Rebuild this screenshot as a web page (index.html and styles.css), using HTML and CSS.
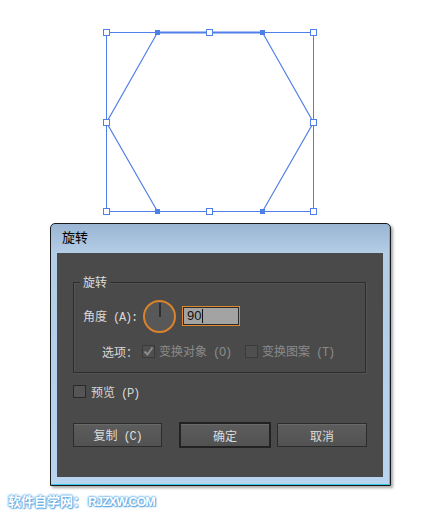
FILE: index.html
```html
<!DOCTYPE html>
<html lang="zh">
<head>
<meta charset="utf-8">
<link rel="stylesheet" href="styles.css">
</head>
<body>
<div class="canvas">
  <svg width="445" height="223" viewBox="0 0 445 223">
    <rect x="106.5" y="32.5" width="207" height="179" fill="none" stroke="#4f7fe9" stroke-width="1"/>
    <polygon points="157.5,32.5 262.5,32.5 313.5,122.5 262.5,211.5 157.5,211.5 106.5,122.5" fill="none" stroke="#4f7fe9" stroke-width="1.2"/>
    <line x1="157.5" y1="32.5" x2="262.5" y2="32.5" stroke="#4f7fe9" stroke-width="2"/>
    <g fill="#fff" stroke="#4f7fe9" stroke-width="1">
      <rect x="103.5" y="29.5" width="6" height="6"/>
      <rect x="206.5" y="29.5" width="6" height="6"/>
      <rect x="310.5" y="29.5" width="6" height="6"/>
      <rect x="103.5" y="119.5" width="6" height="6"/>
      <rect x="310.5" y="119.5" width="6" height="6"/>
      <rect x="103.5" y="208.5" width="6" height="6"/>
      <rect x="206.5" y="208.5" width="6" height="6"/>
      <rect x="310.5" y="208.5" width="6" height="6"/>
    </g>
    <g fill="#4f7fe9">
      <rect x="155" y="30" width="5" height="5"/>
      <rect x="260" y="30" width="5" height="5"/>
      <rect x="155" y="209" width="5" height="5"/>
      <rect x="260" y="209" width="5" height="5"/>
    </g>
  </svg>
</div>

<div class="dialog">
  <div class="titlebar">旋转</div>
  <div class="panel">
    <div class="group">
      <span class="legend">旋转</span>
      <div class="angle-row">
        <span class="angle-label">角度<span class="lat"> (A):</span></span>
        <div class="dial"><span class="needle"></span></div>
        <div class="field">90<span class="caret"></span></div>
      </div>
      <div class="options-row">
        <span class="opt-label">选项：</span>
        <span class="check checked disabled"><svg width="11" height="11" viewBox="0 0 11 11"><path d="M1.5 5.5 L4.5 8.5 L9.5 1.5" fill="none" stroke="#8c8c8c" stroke-width="2"/></svg></span>
        <span class="dim">变换对象<span class="lat"> (O)</span></span>
        <span class="check disabled second"></span>
        <span class="dim">变换图案<span class="lat"> (T)</span></span>
      </div>
    </div>
    <div class="preview-row">
      <span class="check"></span>
      <span class="label">预览<span class="lat"> (P)</span></span>
    </div>
    <div class="buttons">
      <button class="btn copy">复制<span class="lat"> (C)</span></button>
      <button class="btn ok">确定</button>
      <button class="btn cancel">取消</button>
    </div>
  </div>
</div>

<div class="watermark">软件自学网：<span class="wm-lat">RJZXW.COM</span></div>
</body>
</html>
```

FILE: styles.css
```css
html, body {
  margin: 0;
  padding: 0;
  background: #ffffff;
  font-family: "Noto Sans CJK SC", "Liberation Sans", sans-serif;
}

.canvas {
  height: 223px;
}

.canvas svg {
  display: block;
}

.dialog {
  box-sizing: border-box;
  margin-left: 50px;
  width: 341px;
  height: 263px;
  border: 1px solid #1a1a1a;
  border-radius: 5px 5px 0 0;
  background: linear-gradient(to bottom, #9ab5d3 0px, #b3cde7 28px, #b8d4ee 100%);
  box-shadow: inset -1px -1px 0 #38c6ea, 2px 2px 3px rgba(0, 0, 0, 0.35);
}

.titlebar {
  height: 29px;
  padding-left: 11px;
  font-size: 13px;
  line-height: 26px;
  color: #000;
}

.panel {
  box-sizing: border-box;
  margin-left: 6px;
  width: 326px;
  height: 224px;
  background: #4a4a4a;
  padding: 29px 0 0 16px;
  color: #d8d8d8;
  font-size: 12px;
}

.lat {
  font-family: "Liberation Mono", monospace;
  font-size: 12px;
  letter-spacing: -1.2px;
  white-space: pre;
}

.group {
  position: relative;
  box-sizing: border-box;
  width: 293px;
  height: 91px;
  border: 1px solid #2c2c2c;
  box-shadow: inset 1px 1px 0 rgba(255, 255, 255, 0.06), 1px 1px 0 rgba(255, 255, 255, 0.06);
  padding: 17px 0 0 9px;
}

.legend {
  position: absolute;
  left: 6px;
  top: -10px;
  padding: 0 3px;
  background: #4a4a4a;
  font-size: 12px;
  line-height: 18px;
  color: #dcdcdc;
}

.angle-row {
  display: flex;
  align-items: center;
  height: 32px;
}

.angle-label {
  width: 60px;
  color: #d8d8d8;
}

.dial {
  position: relative;
  box-sizing: border-box;
  width: 33px;
  height: 33px;
  border: 2px solid #d9832a;
  border-radius: 50%;
  background: #585858;
}

.needle {
  position: absolute;
  left: 14px;
  top: 1px;
  width: 2px;
  height: 14px;
  background: #2f2f2f;
}

.field {
  box-sizing: border-box;
  margin-left: 6px;
  width: 58px;
  height: 20px;
  border: 1px solid #e0892c;
  box-shadow: inset 0 0 0 1px #2c2c2c;
  background: #a3a3a3;
  color: #111;
  font-family: "Liberation Sans", sans-serif;
  font-size: 13px;
  line-height: 18px;
  padding-left: 4px;
  display: flex;
  align-items: center;
}

.caret {
  display: inline-block;
  width: 1px;
  height: 14px;
  background: #111;
  margin-left: 1px;
}

.options-row {
  display: flex;
  align-items: center;
  margin-top: 11px;
  padding-left: 19px;
  height: 16px;
}

.opt-label {
  width: 40px;
  color: #d8d8d8;
}

.check {
  box-sizing: border-box;
  width: 13px;
  height: 13px;
  border: 1px solid #2a2a2a;
  background: #555;
  display: flex;
  align-items: center;
  justify-content: center;
  margin-right: 4px;
}

.check.disabled {
  background: #4f4f4f;
  border-color: #3a3a3a;
}

.check.second {
  margin-left: 14px;
}

.dim {
  color: #8a8a8a;
}

.preview-row {
  display: flex;
  align-items: center;
  margin-top: 12px;
  height: 13px;
}

.preview-row .label {
  margin-left: 1px;
  color: #d8d8d8;
}

.buttons {
  display: flex;
  align-items: center;
  margin-top: 24px;
}

.btn {
  box-sizing: border-box;
  height: 24px;
  border: 1px solid #2c2c2c;
  background: linear-gradient(to bottom, #5d5d5d, #525252);
  box-shadow: inset 0 1px 0 rgba(255, 255, 255, 0.08);
  color: #dcdcdc;
  font-family: "Noto Sans CJK SC", "Liberation Sans", sans-serif;
  font-size: 12px;
  padding: 0;
}

.btn.copy {
  width: 89px;
}

.btn.ok {
  width: 92px;
  height: 26px;
  margin-left: 17px;
  border: 2px solid #222;
}

.btn.cancel {
  width: 90px;
  margin-left: 6px;
}

.watermark {
  margin: 6px 0 0 8px;
  font-family: "Noto Sans CJK SC", "Liberation Sans", sans-serif;
  font-weight: bold;
  font-size: 13px;
  line-height: 17px;
  color: #ffffff;
  text-shadow: 0 0 2px #5aa8e0, 0 0 2px #5aa8e0, 0 0 3px #7bbcec, 1px 1px 1px #5aa8e0;
}

.wm-lat {
  font-family: "Liberation Sans", sans-serif;
  font-size: 12.5px;
  letter-spacing: -1px;
  margin-left: 2px;
}
```
